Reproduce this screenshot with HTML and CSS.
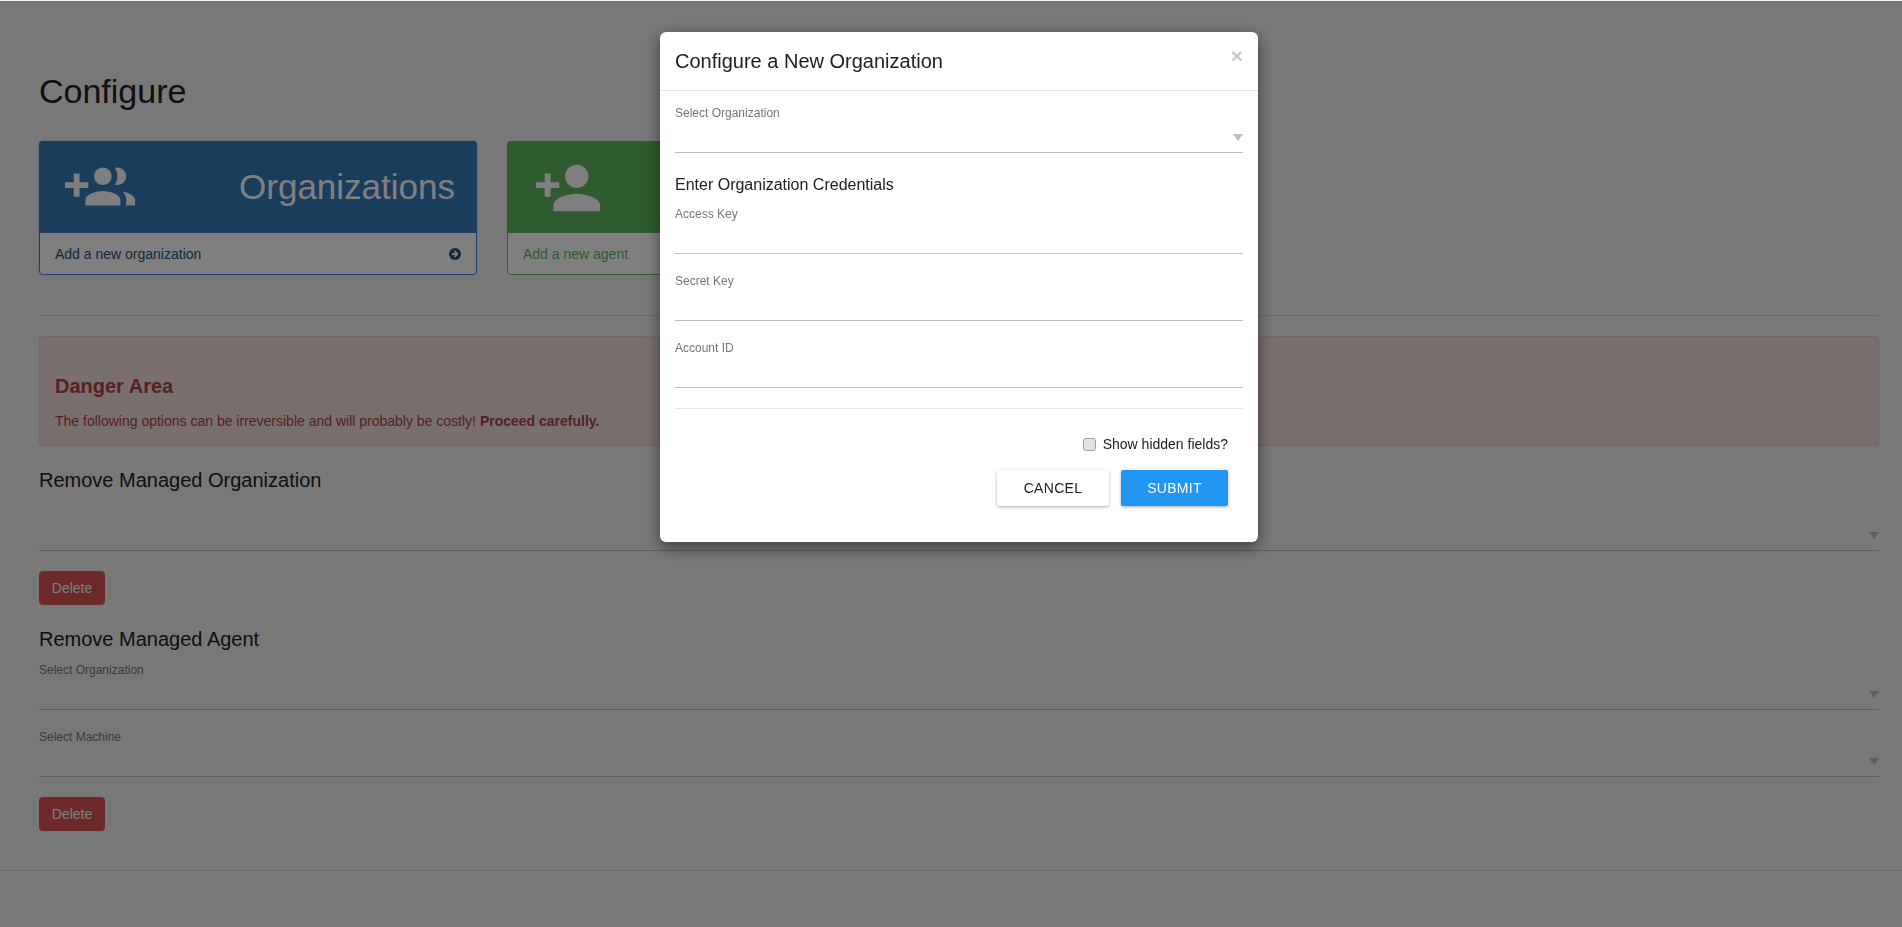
FILE: index.html
```html
<!DOCTYPE html>
<html lang="en">
<head>
    <meta charset="UTF-8" />
    <meta name="viewport" content="width=device-width, initial-scale=1.0" />
    <title>Configure</title>
    <link rel="stylesheet" href="styles.css">
</head>
<body>
    <main class="page">
        <h1 class="page-title">Configure</h1>
        <div class="card-row">
            <a class="card card-blue" href="#">
                <div class="card-head">
                    <svg class="card-icon" viewBox="0 0 24 24"><path d="M8 10H5V7H3v3H0v2h3v3h2v-3h3v-2zm10 1c1.66 0 2.99-1.34 2.99-3S19.66 5 18 5c-.32 0-.63.05-.91.14.57.81.9 1.79.9 2.86s-.34 2.04-.9 2.86c.28.09.59.14.91.14zm-5 0c1.66 0 2.99-1.34 2.99-3S14.66 5 13 5s-3 1.34-3 3 1.34 3 3 3zm6.62 2.16c.83.73 1.38 1.66 1.38 2.84v2h3v-2c0-1.54-2.37-2.49-4.38-2.84zM13 13c-2 0-6 1-6 3v2h12v-2c0-2-4-3-6-3z"/></svg>
                    <span class="card-name">Organizations</span>
                </div>
                <div class="card-foot">
                    <span>Add a new organization</span>
                    <svg class="foot-arrow" viewBox="0 0 24 24"><circle cx="12" cy="12" r="12"/><path class="arrow-cut" d="M6 10.2h6.4L9.8 7.6l2.5-2.5 6.9 6.9-6.9 6.9-2.5-2.5 2.6-2.6H6z"/></svg>
                </div>
            </a>
            <a class="card card-green" href="#">
                <div class="card-head">
                    <svg class="card-icon" viewBox="0 0 24 24"><path d="M15 12c2.21 0 4-1.79 4-4s-1.79-4-4-4-4 1.79-4 4 1.79 4 4 4zm-9-2V7H4v3H1v2h3v3h2v-3h3v-2H6zm9 4c-2.67 0-8 1.34-8 4v2h16v-2c0-2.66-5.33-4-8-4z"/></svg>
                </div>
                <div class="card-foot">
                    <span>Add a new agent</span>
                </div>
            </a>
        </div>
        <hr class="rule">
        <section class="alert-danger">
            <h4>Danger Area</h4>
            <p>The following options can be irreversible and will probably be costly! <strong>Proceed carefully.</strong></p>
        </section>
        <h3 class="section-title">Remove Managed Organization</h3>
        <div class="field field-nolabel"><div class="select-line"><span class="caret"></span></div></div>
        <button class="btn-delete" type="button">Delete</button>
        <h3 class="section-title section-agent">Remove Managed Agent</h3>
        <div class="field field-page">
            <label>Select Organization</label>
            <div class="select-line"><span class="caret"></span></div>
        </div>
        <div class="field field-page">
            <label>Select Machine</label>
            <div class="select-line"><span class="caret"></span></div>
        </div>
        <button class="btn-delete" type="button">Delete</button>
    </main>
    <footer class="page-foot"></footer>

    <div class="backdrop"></div>
    <div class="modal">
        <div class="modal-head">
            <h5>Configure a New Organization</h5>
            <span class="modal-close">&times;</span>
        </div>
        <div class="modal-body">
            <div class="field">
                <label>Select Organization</label>
                <div class="select-line"><span class="caret"></span></div>
            </div>
            <h6 class="cred-title">Enter Organization Credentials</h6>
            <div class="field">
                <label>Access Key</label>
                <div class="select-line"></div>
            </div>
            <div class="field">
                <label>Secret Key</label>
                <div class="select-line"></div>
            </div>
            <div class="field">
                <label>Account ID</label>
                <div class="select-line"></div>
            </div>
            <hr class="modal-rule">
            <label class="hidden-toggle"><input type="checkbox"> Show hidden fields?</label>
            <div class="modal-actions">
                <button class="btn-cancel" type="button">Cancel</button>
                <button class="btn-submit" type="button">Submit</button>
            </div>
        </div>
    </div>
</body>
</html>
```

FILE: styles.css
```css
* {
    box-sizing: border-box;
}
html, body {
    height: 100%;
}
body {
    margin: 0;
    font-family: "Liberation Sans", Arial, sans-serif;
    font-size: 14px;
    color: #212121;
    background-color: #f0f0f0;
    overflow: hidden;
}
.page {
    padding: 71px 23px 0 39px;
}
.page-title {
    margin: 0 0 30px;
    font-size: 34px;
    line-height: 40px;
    font-weight: 400;
}
.card-row {
    display: flex;
    gap: 30px;
}
.card {
    display: block;
    width: 438px;
    height: 134px;
    border-radius: 4px;
    border: 1px solid;
    text-decoration: none;
}
.card-blue {
    border-color: #3f86e8;
    box-shadow: 0 0 1px #3f86e8;
    color: #337ab7;
}
.card-green {
    border-color: #5cb85c;
    color: #5cb85c;
}
.card-head {
    display: flex;
    justify-content: space-between;
    align-items: center;
    height: 92px;
    margin: -1px -1px 0;
    padding: 0 22px 0 26px;
    border-radius: 4px 4px 0 0;
    color: #fff;
}
.card-blue .card-head {
    background-color: #337ab7;
}
.card-green .card-head {
    background-color: #5cb85c;
}
.card-icon {
    width: 70px;
    height: 70px;
    margin-top: 1px;
    fill: #fff;
}
.card-name {
    font-size: 35px;
    line-height: 40px;
}
.card-foot {
    display: flex;
    justify-content: space-between;
    align-items: center;
    height: 41px;
    padding: 0 15px;
    background-color: #fff;
    border-radius: 0 0 4px 4px;
}
.card-blue .card-foot {
    color: #23527c;
}
.foot-arrow {
    width: 12px;
    height: 12px;
    fill: currentColor;
}
.arrow-cut {
    fill: #fff;
}
.rule {
    margin: 40px 0 20px;
    border: 0;
    border-top: 1px solid #d5d5d5;
}
.alert-danger {
    height: 110px;
    padding: 37px 15px 0;
    color: #a94442;
    background-color: #f2dede;
    border: 1px solid #ebccd1;
    border-radius: 4px;
}
.alert-danger h4 {
    margin: 0 0 13px;
    font-size: 20px;
    line-height: 24px;
}
.alert-danger p {
    margin: 0;
    font-size: 14px;
    line-height: 20px;
}
.section-title {
    margin: 22px 0 0;
    font-size: 20px;
    line-height: 24px;
    font-weight: 400;
}
.section-agent {
    margin-bottom: 12px;
}
.field {
    display: flex;
    flex-direction: column;
    margin-bottom: 20px;
}
.field label {
    font-size: 12px;
    line-height: 14px;
    color: #757575;
}
.select-line {
    position: relative;
    height: 33px;
    border-bottom: 1px solid #bdbdbd;
}
.caret {
    position: absolute;
    right: 0;
    top: 14px;
    border-left: 5px solid transparent;
    border-right: 5px solid transparent;
    border-top: 7px solid #bdbdbd;
}
.field-nolabel .select-line {
    height: 59px;
}
.field-nolabel .caret {
    top: 40px;
}
.btn-delete {
    display: block;
    width: 66px;
    height: 34px;
    padding: 0;
    color: #fff;
    font: inherit;
    background-color: #d9534f;
    border: 0;
    border-radius: 4px;
}
.page-foot {
    margin-top: 39px;
    border-top: 1px solid #d5d5d5;
}
.backdrop {
    position: fixed;
    top: 1px;
    left: 0;
    right: 0;
    bottom: 0;
    background-color: #000;
    opacity: 0.5;
}
.modal {
    position: fixed;
    top: 32px;
    left: 660px;
    width: 598px;
    height: 510px;
    background-color: #fff;
    border-radius: 6px;
    box-shadow: 0 5px 15px rgba(0, 0, 0, 0.5);
}
.modal-head {
    display: flex;
    justify-content: space-between;
    height: 59px;
    padding: 15px 15px 0;
    border-bottom: 1px solid #e5e5e5;
}
.modal-head h5 {
    margin: 0;
    font-size: 20px;
    line-height: 29px;
    font-weight: 400;
}
.modal-close {
    margin: -3px 0 0 0;
    font-size: 21px;
    line-height: 24px;
    font-weight: 700;
    color: #c8c8c8;
}
.modal-body {
    padding: 15px 15px 0;
}
.cred-title {
    margin: 0 0 11px;
    padding-top: 1px;
    font-size: 16px;
    line-height: 22px;
    font-weight: 400;
}
.modal-rule {
    margin: 0;
    border: 0;
    border-top: 1px solid #e5e5e5;
}
.hidden-toggle {
    display: flex;
    justify-content: flex-end;
    align-items: center;
    gap: 7px;
    margin: 25px 15px 0 0;
    line-height: 20px;
}
.hidden-toggle input {
    appearance: none;
    width: 13px;
    height: 13px;
    margin: 0;
    background-color: #e2e2e2;
    border: 1px solid #a0a0a0;
    border-radius: 3px;
}
.modal-actions {
    display: flex;
    justify-content: flex-end;
    gap: 12px;
    margin: 16px 15px 0 0;
}
.modal-actions button {
    height: 36px;
    font-family: "Liberation Sans", Arial, sans-serif;
    font-size: 14px;
    text-transform: uppercase;
    letter-spacing: 0.3px;
    border: 0;
    border-radius: 2px;
    box-shadow: 0 1px 3px rgba(0, 0, 0, 0.35);
}
.btn-cancel {
    width: 112px;
    color: #212121;
    background-color: #fff;
}
.btn-submit {
    width: 107px;
    color: #fff;
    background-color: #2196f3;
}
```
